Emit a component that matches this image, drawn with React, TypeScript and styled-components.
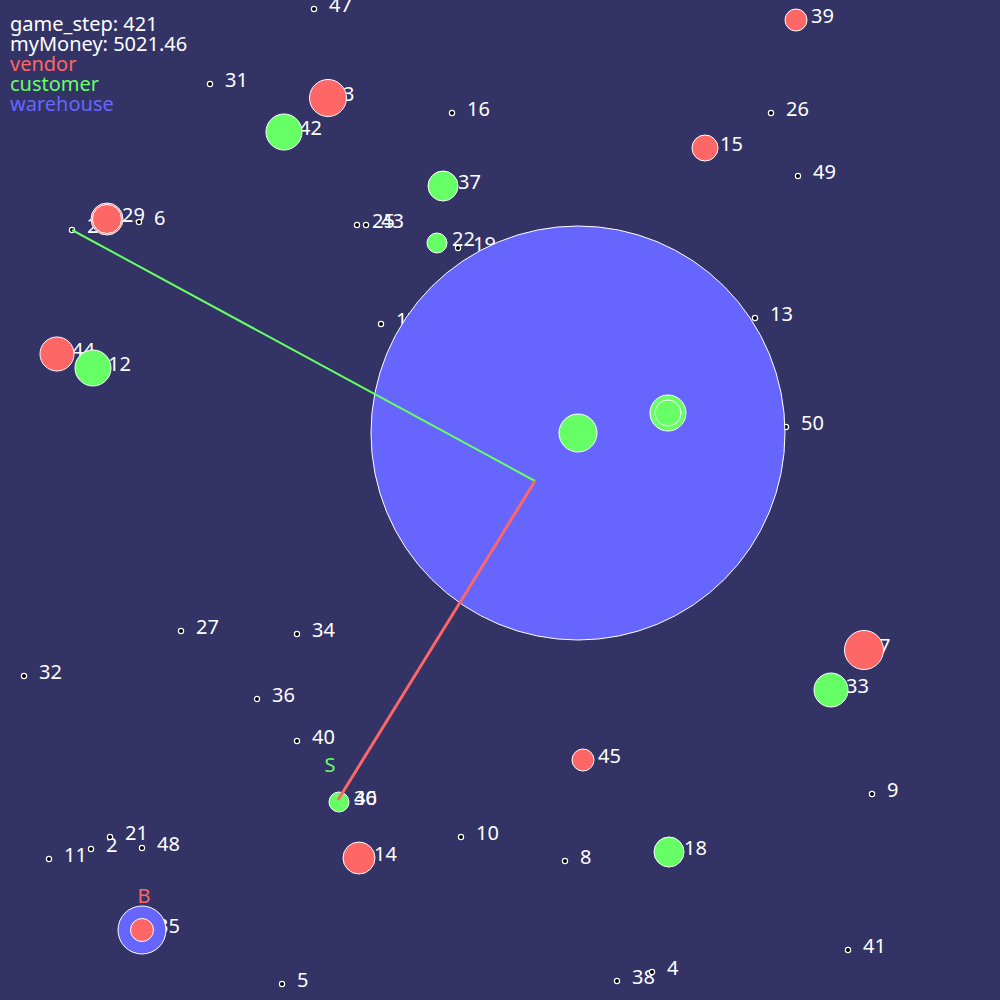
import React from "react";
import styled, { createGlobalStyle } from "styled-components";

type Kind = "vendor" | "customer" | "warehouse";

const COLORS: Record<Kind, string> = {
  vendor: "#ff6666",
  customer: "#66ff66",
  warehouse: "#6666ff",
};

// plain dots (x, y) with their id
const dots: [string, number, number][] = [
  ["47", 314, 9],
  ["31", 210, 84],
  ["16", 452, 113],
  ["26", 771, 113],
  ["49", 798, 176],
  ["20", 72, 230],
  ["6", 139, 222],
  ["25", 357, 225],
  ["43", 366, 225],
  ["19", 458, 248],
  ["17", 381, 324],
  ["13", 755, 318],
  ["50", 786, 427],
  ["27", 181, 631],
  ["34", 297, 634],
  ["32", 24, 676],
  ["36", 257, 699],
  ["40", 297, 741],
  ["9", 872, 794],
  ["10", 461, 837],
  ["21", 110, 837],
  ["2", 91, 849],
  ["48", 142, 848],
  ["11", 49, 859],
  ["8", 565, 861],
  ["41", 848, 950],
  ["5", 282, 984],
  ["38", 617, 981],
  ["4", 652, 972],
  ["46", 339, 802],
];

const warehouses: [string, number, number, number][] = [
  ["1", 578, 433, 207],
  ["35", 142, 930, 24],
];

// entities with size: kind, id, x, y, r
const bodies: [Kind, string, number, number, number][] = [
  ["vendor", "39", 796, 20, 11],
  ["vendor", "3", 328, 98, 18.5],
  ["vendor", "15", 705, 148, 13],
  ["vendor", "29", 107, 219, 16],
  ["vendor", "44", 57, 354, 17],
  ["vendor", "7", 864, 650, 19.5],
  ["vendor", "45", 583, 760, 11],
  ["vendor", "14", 359, 858, 16],
  ["vendor", "", 142, 930, 11.5],
  ["customer", "42", 284, 132, 18],
  ["customer", "37", 443, 186, 15],
  ["customer", "22", 437, 243, 10],
  ["customer", "12", 93, 368, 18],
  ["customer", "33", 831, 690, 17],
  ["customer", "18", 669, 852, 15],
  ["customer", "30", 339, 802, 10],
  ["customer", "", 578, 433, 19],
  ["customer", "", 668, 413, 18],
];

// inner rings (carried items)
const rings: [number, number, number][] = [
  [668, 413, 13],
  [107, 219, 14.5],
];

const GlobalStyle = createGlobalStyle`
  html, body {
    margin: 0;
    padding: 0;
    background: #333366;
  }
  body {
    font-family: "Noto Sans", "Open Sans", sans-serif;
  }
`;

const App: React.FC = () => {
  const labels = [
    ...dots.map(([id, x, y]) => ({ id, x, y })),
    ...warehouses.map(([id, x, y]) => ({ id, x, y })),
    ...bodies.filter((b) => b[1]).map(([, id, x, y]) => ({ id, x, y })),
  ];

  return (
    <Stage>
      <GlobalStyle />
      <Board viewBox="0 0 1000 1000">
        {/* 라벨 */}
        {labels.map((l, inx) => (
          <Label key={`label-${inx}`} x={l.x + 15} y={l.y + 3}>
            {l.id}
          </Label>
        ))}

        {/* 점 */}
        {dots.map(([id, x, y]) => (
          <Dot key={`dot-${id}`} cx={x} cy={y} r={2.6} />
        ))}

        {/* 창고 */}
        {warehouses.map(([id, x, y, r]) => (
          <Body key={`wh-${id}`} $kind="warehouse" cx={x} cy={y} r={r} />
        ))}

        {bodies.map(([kind, id, x, y, r], inx) => (
          <Body key={`body-${inx}-${id}`} $kind={kind} cx={x} cy={y} r={r} />
        ))}

        {rings.map(([x, y, r], inx) => (
          <Ring key={`ring-${inx}`} cx={x} cy={y} r={r} />
        ))}

        {/* 경로 */}
        <Route $kind="customer" x1={72} y1={230} x2={535} y2={481} />
        <Route $kind="vendor" x1={535} y1={481} x2={338} y2={800} />

        <Mark $kind="customer" x={330} y={772}>
          S
        </Mark>
        <Mark $kind="vendor" x={144} y={903}>
          B
        </Mark>
      </Board>

      <Legend>
        <LegendLine>game_step: 421</LegendLine>
        <LegendLine>myMoney: 5021.46</LegendLine>
        <LegendLine $kind="vendor">vendor</LegendLine>
        <LegendLine $kind="customer">customer</LegendLine>
        <LegendLine $kind="warehouse">warehouse</LegendLine>
      </Legend>
    </Stage>
  );
};

const Stage = styled.div`
  position: relative;
  width: 1000px;
  height: 1000px;
  background: #333366;
  overflow: hidden;
`;

const Board = styled.svg`
  position: absolute;
  inset: 0;
  width: 1000px;
  height: 1000px;
`;

const Label = styled.text`
  font-family: "Noto Sans", "Open Sans", sans-serif;
  font-size: 20px;
  fill: #ffffff;
`;

const Dot = styled.circle`
  fill: #000000;
  stroke: #ffffff;
  stroke-width: 1.2;
`;

const Body = styled.circle<{ $kind: Kind }>`
  fill: ${(p) => COLORS[p.$kind]};
  stroke: #ffffff;
  stroke-width: 1;
`;

const Ring = styled.circle`
  fill: none;
  stroke: #ffffff;
  stroke-width: 1;
`;

const Route = styled.line<{ $kind: Kind }>`
  stroke: ${(p) => COLORS[p.$kind]};
  stroke-width: ${(p) => (p.$kind === "vendor" ? 3 : 2)};
`;

const Mark = styled.text<{ $kind: Kind }>`
  font-family: "Noto Sans", "Open Sans", sans-serif;
  font-size: 20px;
  text-anchor: middle;
  fill: ${(p) => COLORS[p.$kind]};
`;

const Legend = styled.div`
  position: relative;
  display: flex;
  flex-direction: column;
  padding: 14px 0 0 10px;
  font-family: "Noto Sans", "Open Sans", sans-serif;
  font-size: 20px;
  line-height: 20px;
`;

const LegendLine = styled.div<{ $kind?: Kind }>`
  color: ${(p) => (p.$kind ? COLORS[p.$kind] : "#ffffff")};
`;

export default App;
